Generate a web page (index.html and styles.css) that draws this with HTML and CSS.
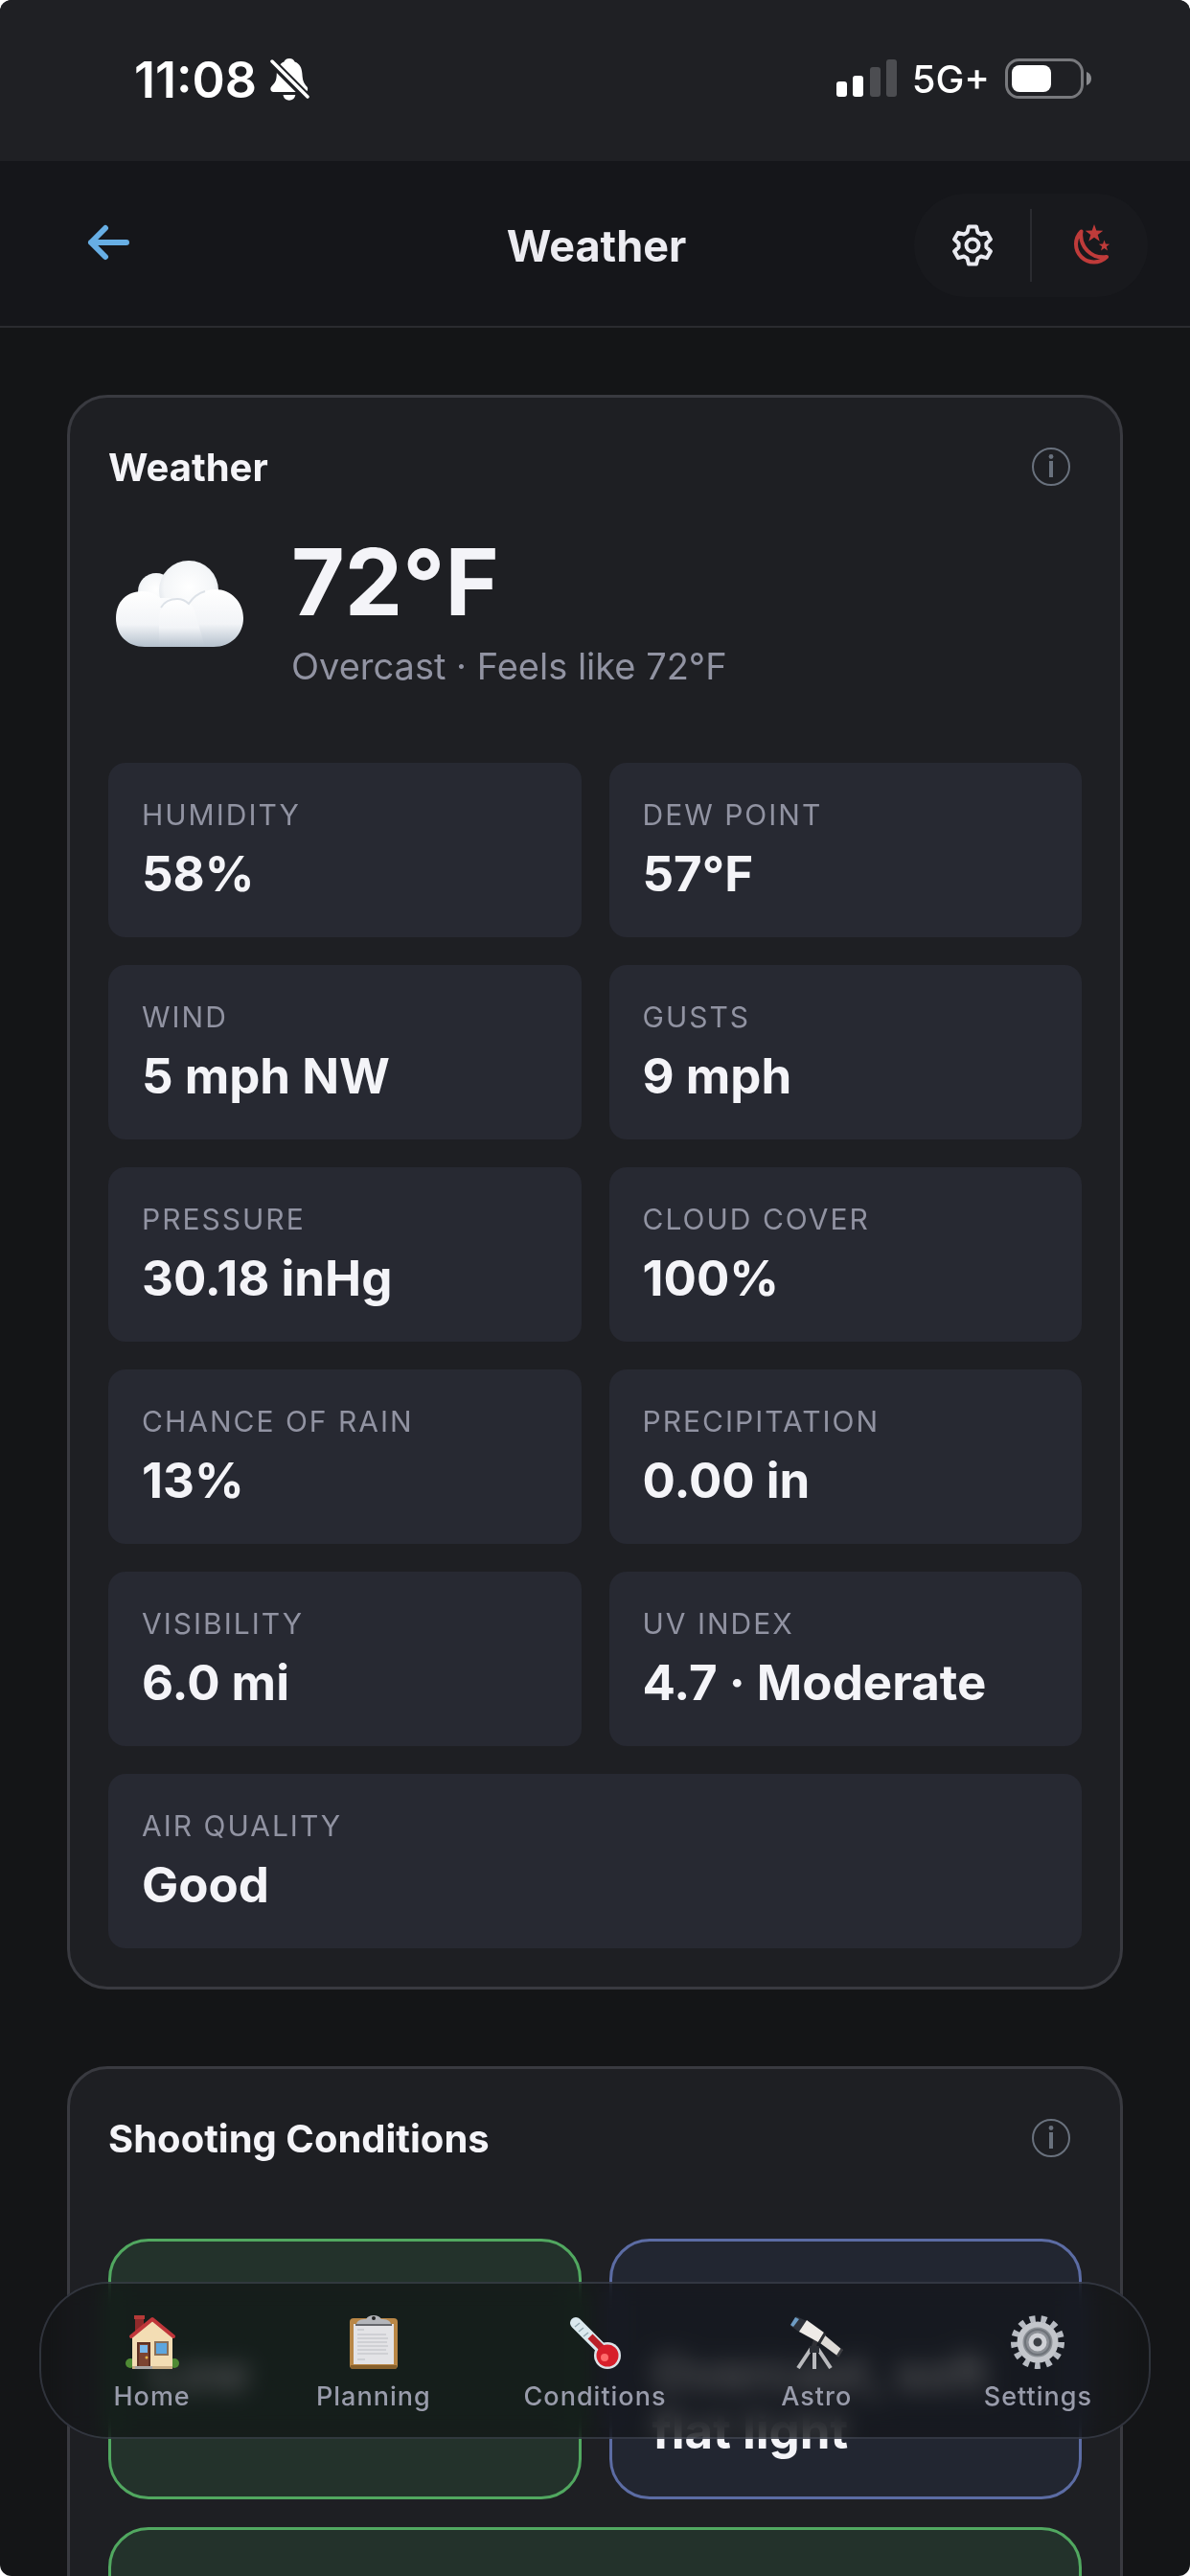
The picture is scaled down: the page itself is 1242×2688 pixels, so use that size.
FILE: index.html
```html
<!DOCTYPE html>
<html lang="en">
<head>
<meta charset="utf-8">
<meta name="viewport" content="width=device-width, initial-scale=1">
<title>Weather</title>
<link rel="stylesheet" href="styles.css">
</head>
<body>
<div class="app">
  <div class="status">
    <div class="status-group">
      <span class="status-time">11:08</span>
      <svg class="bell" viewBox="0 0 41 46" aria-hidden="true">
        <path fill="#fff" d="M20 1c3 0 5 1.500 5.600 3.600C31 6.600 33 11 33.400 17c.4 7 1.600 10 5 13.400 1.400 1.600 1 5.600-2.400 5.600H3.500C0 36-.5 32 1.500 30c4-4 5-6 5.300-13C7.200 11 9.500 6.600 14.400 4.600 15 2.500 17 1 20 1zM13.500 39h12.800c-.6 3.600-3.200 5.700-6.400 5.700s-5.800-2.100-6.400-5.700z"/>
        <path stroke="#1f2024" stroke-width="9" d="M-1 2l42 42"/>
        <path stroke="#fff" stroke-width="3.500" stroke-linecap="round" d="M2 4l37 37"/>
      </svg>
    </div>
    <div class="status-group status-right">
      <svg class="signal" viewBox="0 0 63 40" aria-hidden="true">
        <rect x="0" y="23" width="11" height="16" rx="3" fill="#fff"/>
        <rect x="17" y="17" width="11" height="22" rx="3" fill="#fff"/>
        <rect x="35" y="8" width="11" height="31" rx="3" fill="#4c4d51"/>
        <rect x="52" y="0" width="11" height="39" rx="3" fill="#4c4d51"/>
      </svg>
      <span class="status-net">5G+</span>
      <svg class="battery" viewBox="0 0 91 42" aria-hidden="true">
        <rect x="1.500" y="1.500" width="79" height="39" rx="13" fill="none" stroke="#78797d" stroke-width="3"/>
        <rect x="7" y="7" width="41" height="28" rx="8" fill="#fff"/>
        <path fill="#8a8b8f" d="M85 14c3 1 5 3.500 5 7s-2 6-5 7z"/>
      </svg>
    </div>
  </div>

  <header class="topbar">
    <button class="back" type="button" aria-label="Back">
      <svg viewBox="0 0 44 38" aria-hidden="true"><path fill="none" stroke="#67aee4" stroke-width="6" stroke-linecap="round" stroke-linejoin="round" d="M19 4L4 19l15 15M4 19h37"/></svg>
    </button>
    <h1>Weather</h1>
    <div class="pill">
      <button type="button" aria-label="Settings">
        <svg viewBox="-24 -24 48 48" aria-hidden="true"><g fill="none" stroke="#e9eaf0" stroke-width="4" stroke-linejoin="round"><path d="M-4-19.500H4L5.500-13.500L8.900-11.500L14.900-13.200L18.900-6.300L14.400-2V2L18.900 6.300L14.900 13.200L8.900 11.500L5.500 13.500L4 19.500H-4L-5.500 13.500L-8.900 11.500L-14.900 13.200L-18.900 6.300L-14.400 2V-2L-18.900-6.300L-14.900-13.200L-8.900-11.500L-5.500-13.500Z"/><circle r="6.500"/></g></svg>
      </button>
      <button type="button" aria-label="Night mode">
        <svg viewBox="0 0 48 48" aria-hidden="true"><path fill="none" stroke="#bf3b3a" stroke-width="4" stroke-linejoin="round" d="M14.500 9.500A18 18 0 1 0 41 36A23 23 0 0 1 14.500 9.500Z"/><path fill="#bf3b3a" d="M28 2l2.300 6.600 7 .1-5.600 4.300 2 6.700-5.700-4-5.700 4 2-6.700L18.700 8.700l7-.1zM38.500 18.500l1.400 4.100 4.300.1-3.400 2.600 1.200 4.100-3.500-2.400-3.500 2.400 1.200-4.100-3.400-2.600 4.300-.1z"/></svg>
      </button>
    </div>
  </header>

  <main class="content">
    <section class="card">
      <div class="card-head">
        <h2>Weather</h2>
        <button class="info" type="button" aria-label="About weather">
          <svg viewBox="0 0 40 40" aria-hidden="true"><circle cx="20" cy="20" r="19" fill="none" stroke="#69717d" stroke-width="2"/><path stroke="#69717d" stroke-width="4" d="M20 14v17"/><circle cx="20" cy="9.500" r="2.400" fill="#69717d"/></svg>
        </button>
      </div>
      <div class="now">
        <svg class="cloud" viewBox="0 0 150 150" aria-hidden="true">
          <defs>
            <linearGradient id="cloudBase" x1="0" y1="0" x2="0" y2="1"><stop offset="0" stop-color="#fbfcfd"/><stop offset=".55" stop-color="#eff1f5"/><stop offset="1" stop-color="#b9c4d0"/></linearGradient>
            <radialGradient id="puff" cx=".5" cy=".45" r=".6"><stop offset="0" stop-color="#fff"/><stop offset=".7" stop-color="#f4f6f8"/><stop offset="1" stop-color="#d9dfe6"/></radialGradient>
            <linearGradient id="puffLow" x1="0" y1="0" x2="0" y2="1"><stop offset="0" stop-color="#fff"/><stop offset=".6" stop-color="#f2f4f7"/><stop offset="1" stop-color="#b5c1cd"/></linearGradient>
          </defs>
          <circle cx="50" cy="53" r="19" fill="url(#puff)"/>
          <circle cx="84" cy="52" r="31" fill="url(#puff)"/>
          <path fill="url(#cloudBase)" d="M38 60h72v51H38z"/>
          <path fill="url(#puffLow)" d="M38 111C20 111 8 99 8 81S20 53 36 53s26 12 26 29v29z"/>
          <path fill="url(#puffLow)" d="M110 111c18 0 31-13 31-30s-13-30-29-30-29 11-32 28l-8 32z"/>
          <path fill="url(#puffLow)" d="M53 82c0-13 8-21 19-21s17 6 19 16l10 34H53z"/>
          <path fill="none" stroke="#dde2e8" stroke-width="2" d="M55 70c4-7 10-9 17-9 5 0 9 2 12 5 4-6 10-11 17-13"/>
        </svg>
        <div class="now-text">
          <p class="temp">72°F</p>
          <p class="summary">Overcast · Feels like 72°F</p>
        </div>
      </div>
      <dl class="stats">
        <div class="stat"><dt>HUMIDITY</dt><dd>58%</dd></div>
        <div class="stat"><dt>DEW POINT</dt><dd>57°F</dd></div>
        <div class="stat"><dt>WIND</dt><dd>5 mph NW</dd></div>
        <div class="stat"><dt>GUSTS</dt><dd>9 mph</dd></div>
        <div class="stat"><dt>PRESSURE</dt><dd>30.18 inHg</dd></div>
        <div class="stat"><dt>CLOUD COVER</dt><dd>100%</dd></div>
        <div class="stat"><dt>CHANCE OF RAIN</dt><dd>13%</dd></div>
        <div class="stat"><dt>PRECIPITATION</dt><dd>0.00 in</dd></div>
        <div class="stat"><dt>VISIBILITY</dt><dd>6.0 mi</dd></div>
        <div class="stat"><dt>UV INDEX</dt><dd>4.7 · Moderate</dd></div>
        <div class="stat wide"><dt>AIR QUALITY</dt><dd>Good</dd></div>
      </dl>
    </section>

    <section class="card">
      <div class="card-head">
        <h2>Shooting Conditions</h2>
        <button class="info" type="button" aria-label="About shooting conditions">
          <svg viewBox="0 0 40 40" aria-hidden="true"><circle cx="20" cy="20" r="19" fill="none" stroke="#69717d" stroke-width="2"/><path stroke="#69717d" stroke-width="4" d="M20 14v17"/><circle cx="20" cy="9.500" r="2.400" fill="#69717d"/></svg>
        </button>
      </div>
      <div class="shoots">
        <div class="shoot good"><p>Low</p></div>
        <div class="shoot soft"><p>Overcast, soft<br>flat light</p></div>
        <div class="shoot good wide"></div>
      </div>
    </section>
  </main>

  <nav class="tabs" aria-label="Main">
    <a href="#home">
      <svg viewBox="0 0 56 56" aria-hidden="true">
        <circle cx="5" cy="50" r="5" fill="#4f8a34"/><circle cx="51" cy="50" r="5" fill="#4f8a34"/>
        <path fill="#8f2a2b" d="M10 1h9v16l-9 8z"/><path fill="#b53a38" d="M9 0h11v4H9z"/>
        <path fill="#f3ddb4" d="M7 23L28 4l21 19v33H7z"/>
        <path fill="#c9ad86" d="M7 53h42v3H7z"/>
        <path fill="none" stroke="#c0363a" stroke-width="4" stroke-linejoin="round" stroke-linecap="round" d="M6 22L28 4l22 18"/>
        <path fill="#5d2f22" d="M12 28h14v26H12z"/><path fill="#7c4431" d="M14 30h10v24H14z"/><path fill="#79b7ea" d="M15 31h8v8h-8z"/><circle cx="22" cy="44" r="1.500" fill="#e5b54a"/>
        <path fill="#8a7059" d="M30 27h15v15H30z"/><path fill="#5da6df" d="M32 29h11v11H32z"/>
        <path fill="#a7a5a4" d="M10 53h18v3H10z"/>
      </svg>
      <span>Home</span>
    </a>
    <a href="#planning">
      <svg viewBox="0 0 56 56" aria-hidden="true">
        <rect x="3" y="3" width="50" height="53" rx="4" fill="#b98746"/><path fill="#87602c" d="M4 52h48v2a2 2 0 0 1-2 2H6a2 2 0 0 1-2-2z"/>
        <path fill="#e3e3e6" d="M7 9h42v42H7z"/>
        <path stroke="#cfd0d4" stroke-width="2" d="M11 15h7M11 20h30M11 24h32M11 28h31M11 32h32M11 36h30M11 40h32M11 46h8"/>
        <path fill="#b3b5ba" d="M10 10c0-5 5-6 10-6 2-3 4-4 8-4s6 1 8 4c5 0 10 1 10 6z"/><path fill="#65676c" d="M9 9h38v2H9z"/><circle cx="28" cy="3" r="2" fill="#222"/>
      </svg>
      <span>Planning</span>
    </a>
    <a href="#conditions">
      <svg viewBox="0 0 56 56" aria-hidden="true">
        <path stroke="#dbe9ee" stroke-width="12" stroke-linecap="round" d="M8 8l28 28"/><circle cx="41" cy="42" r="14" fill="#dbe3e8"/>
        <path stroke="#b92029" stroke-width="7" d="M23 22l16 16"/><circle cx="41" cy="42" r="11.500" fill="#d71f2b"/><circle cx="38" cy="44" r="4" fill="#ff6b6b"/>
        <path stroke="#93a9b1" stroke-width="1.500" d="M7 12l5-4M11 17l5-4M16 22l5-4"/>
      </svg>
      <span>Conditions</span>
    </a>
    <a href="#astro">
      <svg viewBox="0 0 56 56" aria-hidden="true">
        <path stroke="#303136" stroke-width="5" d="M25 34l3-10"/>
        <path stroke="#b9babd" stroke-width="4" d="M23 34L9 55M26 34v22M29 34l14 21"/>
        <path fill="#2c2f35" d="M21 32h10v7H21z"/>
        <path fill="#2d3139" d="M7 1L18 6L11 18L1 11z"/>
        <path fill="#6e9cc4" d="M6 2l4 2-6 8-3-2z"/>
        <path fill="#eeebe7" d="M18 5L36 18L30 28L10 17z"/>
        <path fill="#dedbd7" d="M36 20l19 16-4 7-19-14z"/>
        <path stroke="#2d2f34" stroke-width="3" d="M37 19l-6 10"/>
        <path stroke="#3b3c40" stroke-width="3" d="M55 35l-5 8"/>
      </svg>
      <span>Astro</span>
    </a>
    <a href="#settings">
      <svg viewBox="-28 -28 56 56" aria-hidden="true">
        <circle r="24.500" fill="none" stroke="#b7bbc2" stroke-width="7" stroke-dasharray="5.800 6.028"/>
        <circle r="18.500" fill="#8b8f95" stroke="#c3c6cb" stroke-width="6"/>
        <circle r="13" fill="none" stroke="#6e7379" stroke-width="2"/>
        <circle r="7" fill="#3c4046" stroke="#cfd1d6" stroke-width="5"/>
      </svg>
      <span>Settings</span>
    </a>
  </nav>
</div>
</body>
</html>
```
FILE: styles.css
```css
* {
  box-sizing: border-box;
}

body {
  margin: 0;
  background: #fff;
  color: #f4f4f8;
  font-family: Inter, "Noto Sans", sans-serif;
}

h1, h2, p, dl, dd {
  margin: 0;
}

button {
  padding: 0;
  border: 0;
  background: none;
  color: inherit;
  font: inherit;
  cursor: pointer;
}

svg {
  display: block;
  flex: none;
}

.app {
  position: relative;
  display: flex;
  flex-direction: column;
  height: 100vh;
  overflow: hidden;
  border-radius: 12px;
  background: #141517;
}

/* Status bar */
.status {
  display: flex;
  justify-content: space-between;
  flex: none;
  height: 168px;
  padding: 52px 102px 0 140px;
  background: #1f2024;
  color: #fff;
}

.status-group {
  display: flex;
  align-items: center;
  gap: 14px;
  height: 62px;
}

.status-right {
  gap: 16px;
  height: 60px;
}

.status-time {
  font-size: 52px;
  font-weight: 600;
}

.status-net {
  font-size: 40px;
  font-weight: 500;
}

.bell {
  width: 41px;
  height: 46px;
}

.signal {
  width: 63px;
  height: 40px;
}

.battery {
  width: 91px;
  height: 42px;
}

/* Title bar */
.topbar {
  display: grid;
  grid-template-columns: 200px 1fr 244px;
  align-items: center;
  flex: none;
  height: 174px;
  padding: 4px 44px 0 91px;
  border-bottom: 2px solid #2a2b2f;
  background: #15161a;
}

.topbar h1 {
  font-size: 45px;
  font-weight: 700;
  text-align: center;
  color: #ececf1;
}

.back {
  justify-self: start;
  margin-bottom: 6px;
}

.back svg {
  width: 44px;
  height: 38px;
}

.pill {
  display: flex;
  height: 108px;
  padding: 16px 0;
  border-radius: 54px;
  background: #18191d;
}

.pill button {
  display: grid;
  flex: 1;
  place-items: center;
}

.pill button + button {
  border-left: 2px solid #2a2b30;
}

.pill svg {
  width: 48px;
  height: 48px;
}

/* Scrolling content */
.content {
  display: flex;
  flex: 1;
  flex-direction: column;
  gap: 80px;
  min-height: 0;
  padding: 70px;
  overflow-y: auto;
  scrollbar-width: none;
}

.card {
  flex: none;
  padding: 40px;
  border: 3px solid #393a40;
  border-radius: 42px;
  background: #1e1f23;
}

.card-head {
  display: flex;
  align-items: center;
  justify-content: space-between;
  height: 64px;
  padding-right: 12px;
}

.card-head h2 {
  font-size: 40px;
  font-weight: 700;
}

.info svg {
  width: 40px;
  height: 40px;
}

.now {
  display: flex;
  align-items: center;
  gap: 41px;
  padding: 40px 0 77px;
}

.cloud {
  width: 150px;
  height: 150px;
}

.now-text {
  display: grid;
  gap: 16px;
}

.temp {
  font-size: 96px;
  font-weight: 700;
  line-height: 96px;
}

.summary {
  font-size: 38px;
  line-height: 48px;
  color: #9193a2;
}

.stats,
.shoots {
  display: grid;
  grid-template-columns: 1fr 1fr;
  gap: 29px;
}

.stat {
  padding: 34px 35px 36px;
  border-radius: 18px;
  background: #272932;
}

.wide {
  grid-column: 1 / -1;
}

.stat dt {
  font-size: 30px;
  line-height: 40px;
  letter-spacing: 2px;
  color: #9193a2;
}

.stat dd {
  margin-top: 12px;
  font-size: 51px;
  font-weight: 700;
  line-height: 60px;
}

.shoots {
  margin-top: 73px;
}

.shoot {
  min-height: 272px;
  padding: 108px 42px 38px;
  border: 3px solid #51a860;
  border-radius: 42px;
  font-size: 51px;
  font-weight: 700;
  line-height: 60px;
}

.good {
  background: #23322b;
}

.soft {
  border-color: #5c6ca4;
  background: #222631;
}

/* Floating tab bar */
.tabs {
  position: absolute;
  right: 41px;
  bottom: 143px;
  left: 41px;
  display: flex;
  padding: 33px 0 26px;
  border: 2px solid rgba(150, 160, 190, 0.22);
  border-radius: 72px;
  background: rgba(20, 21, 23, 0.74);
  backdrop-filter: blur(12px) saturate(2);
}

.tabs a {
  display: flex;
  flex: 1;
  flex-direction: column;
  align-items: center;
  gap: 13px;
  color: #999cab;
  font-size: 27px;
  font-weight: 500;
  line-height: 32px;
  letter-spacing: 1px;
  text-decoration: none;
}

.tabs svg {
  width: 56px;
  height: 56px;
}
```
